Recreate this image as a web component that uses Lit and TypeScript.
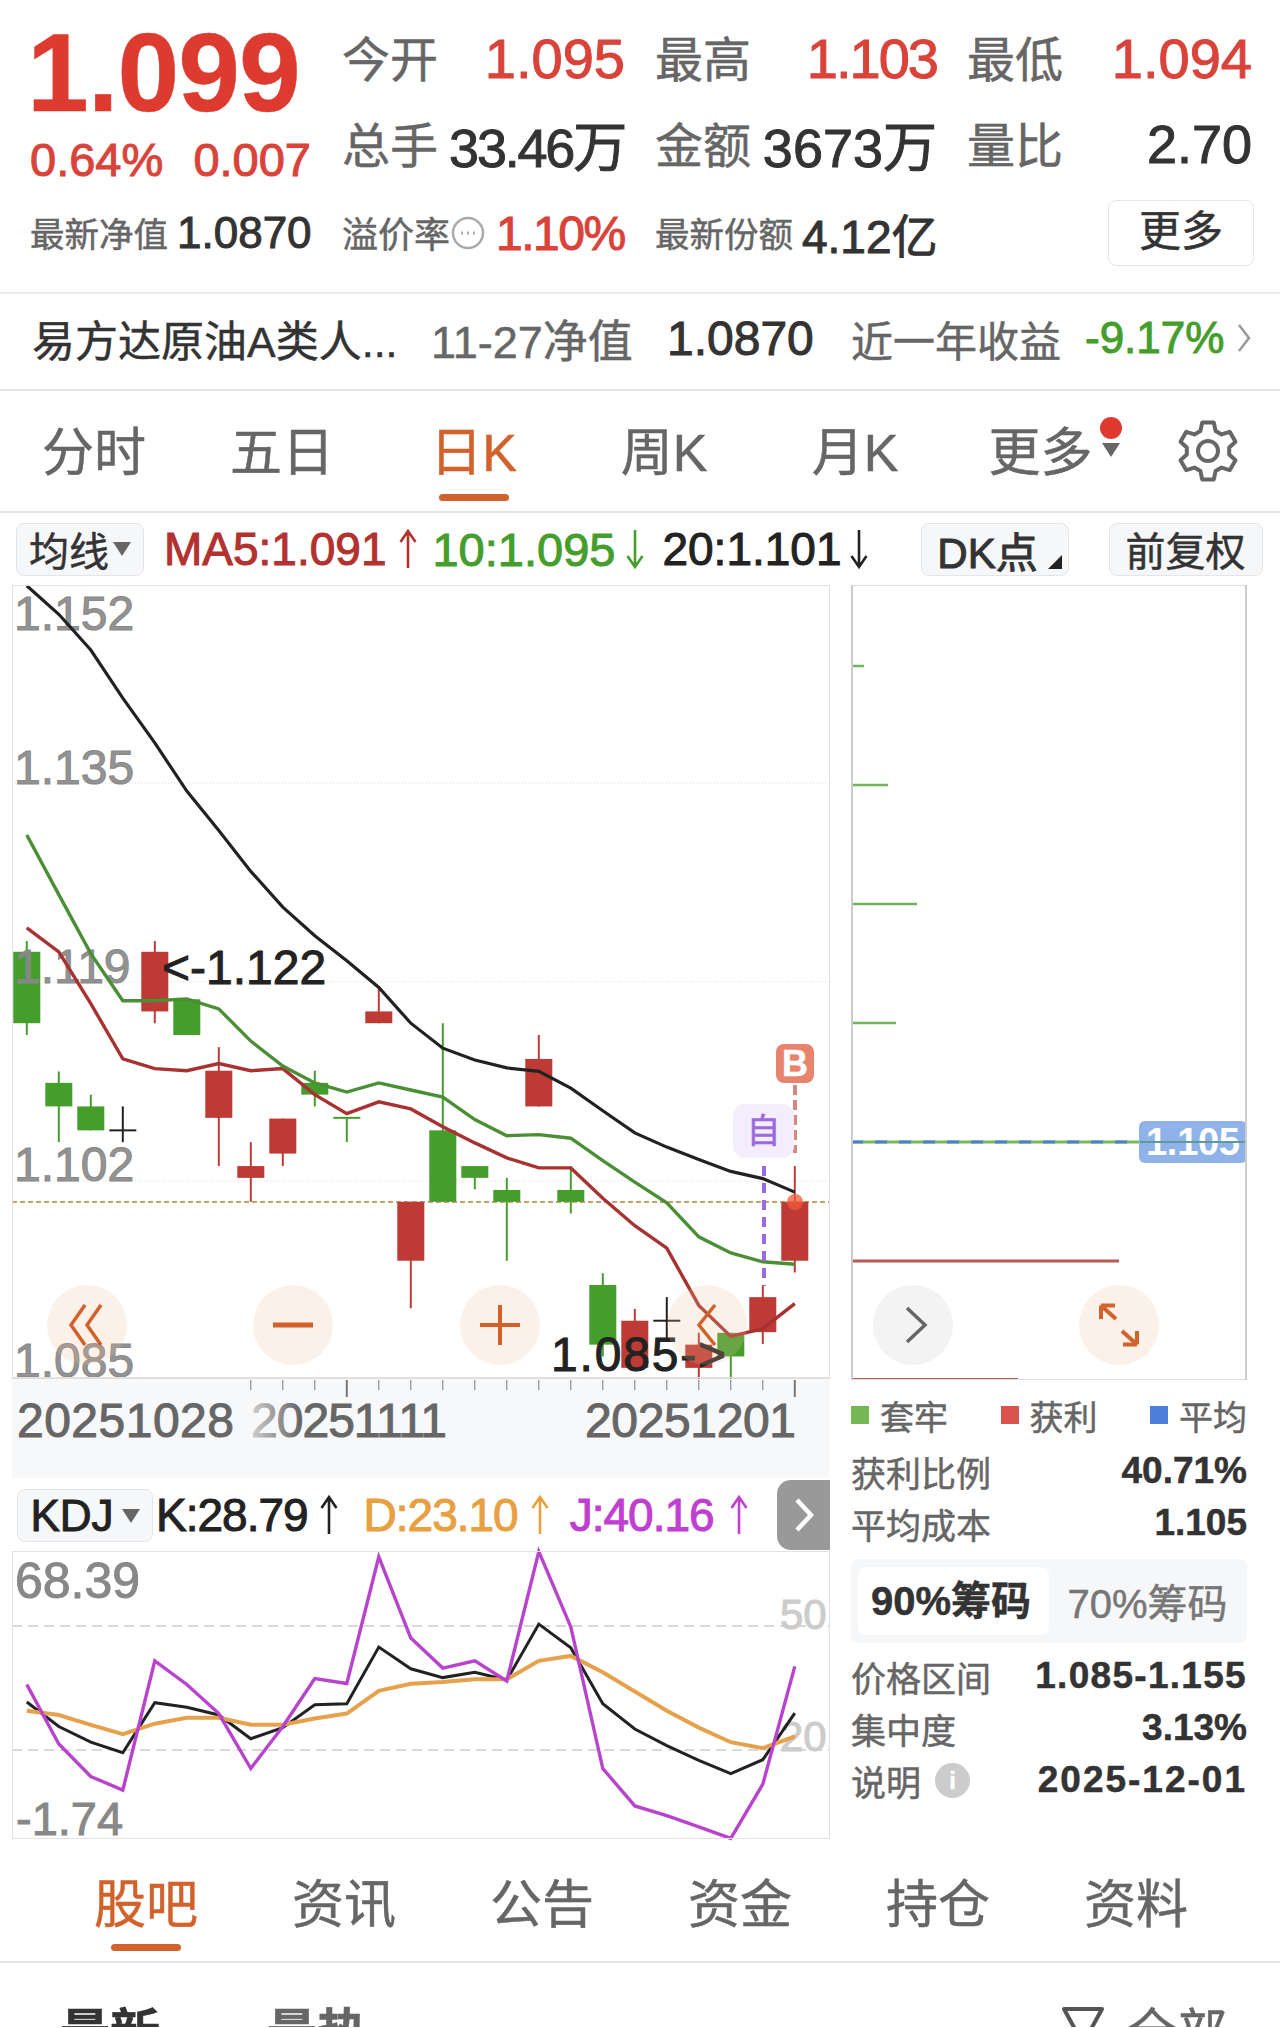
import { LitElement, html, css, svg } from 'lit';
import { customElement } from 'lit/decorators.js';

const RED = '#bd3a35';
const GREEN = '#459e2c';

// y values are read off the reference crop, cy() turns them into page pixels
const cy = (z: number) => 950 + z / 2.8;
const ky = (z: number) => 1480 + z / 2.86;
const cx = (i: number) => 26.8 + 32 * i;

type Candle = [string, number, number, number, number];
const CANDLES: Candle[] = [
  ['g', -25, 5, 205, 238],
  ['g', 340, 372, 438, 538],
  ['g', 405, 438, 505, 505],
  ['x', 438, 505, 505, 538],
  ['r', -25, 5, 172, 205],
  ['g', 138, 138, 238, 238],
  ['r', 272, 338, 470, 605],
  ['r', 538, 605, 638, 705],
  ['r', 472, 472, 570, 605],
  ['g', 338, 372, 405, 438],
  ['t', 470, 470, 470, 538],
  ['r', 105, 172, 205, 205],
  ['r', 705, 705, 870, 1003],
  ['g', 205, 505, 705, 705],
  ['g', 605, 605, 638, 670],
  ['g', 638, 672, 705, 870],
  ['r', 238, 305, 438, 438],
  ['g', 605, 672, 705, 738],
  ['g', 905, 938, 1105, 1138],
  ['r', 1005, 1038, 1170, 1170],
  ['x', 972, 1038, 1038, 1090],
  ['r', 1072, 1105, 1170, 1200],
  ['g', 1072, 1072, 1138, 1200],
  ['r', 938, 972, 1070, 1103],
  ['r', 605, 705, 870, 903],
];

const MA5 = [-62, 5, 150, 305, 332, 338, 318, 338, 332, 405, 458, 425, 445, 495, 540, 582, 610, 610, 695, 772, 835, 995, 1082, 1060, 990];
const MA10 = [-322, -155, 10, 142, 142, 137, 165, 255, 325, 372, 398, 372, 392, 412, 475, 520, 517, 527, 590, 650, 708, 803, 848, 873, 880];
const MA20 = [-1020, -940, -840, -705, -580, -445, -335, -220, -120, -40, 30, 105, 205, 275, 308, 330, 340, 387, 450, 512, 552, 587, 620, 640, 678];

const K = [635, 705, 750, 780, 637, 650, 672, 740, 708, 643, 640, 478, 540, 565, 550, 572, 412, 480, 640, 712, 760, 802, 840, 800, 667];
const D = [660, 672, 700, 727, 697, 680, 680, 700, 700, 682, 668, 603, 583, 578, 570, 570, 517, 503, 550, 605, 660, 708, 750, 767, 733];
const J = [585, 755, 848, 887, 517, 585, 668, 825, 705, 568, 582, 220, 452, 538, 517, 575, 205, 420, 825, 932, 960, 992, 1025, 870, 533];

const points = (vals: number[], toY: (z: number) => number) =>
  vals.map((v, i) => `${cx(i).toFixed(1)},${toY(v).toFixed(1)}`).join(' ');

function candle(c: Candle, i: number) {
  const [kind, top, bodyTop, bodyBottom, bottom] = c;
  const x = cx(i);
  if (kind === 'x' || kind === 't') {
    return svg`<line x1=${x} x2=${x} y1=${cy(top)} y2=${cy(bottom)} stroke=${kind === 'x' ? '#222' : GREEN} stroke-width="2"></line>
      <line x1=${x - 13.5} x2=${x + 13.5} y1=${cy(bodyTop)} y2=${cy(bodyTop)} stroke=${kind === 'x' ? '#222' : GREEN} stroke-width="2"></line>`;
  }
  const color = kind === 'r' ? RED : GREEN;
  return svg`<line x1=${x} x2=${x} y1=${cy(top)} y2=${cy(bottom)} stroke=${color} stroke-width="2"></line>
    <rect x=${x - 13.5} y=${cy(bodyTop)} width="27" height=${cy(bodyBottom) - cy(bodyTop)} fill=${color}></rect>`;
}

function gearPath(cxx: number, cyy: number, outer: number, root: number) {
  const pts: string[] = [];
  for (let t = 0; t < 6; t++) {
    const a = (t * Math.PI) / 3 - Math.PI / 2;
    const offs: [number, number][] = [[-0.36, root], [-0.2, outer], [0.2, outer], [0.36, root]];
    for (const [d, r] of offs) {
      pts.push(`${(cxx + r * Math.cos(a + d)).toFixed(1)},${(cyy + r * Math.sin(a + d)).toFixed(1)}`);
    }
  }
  return 'M' + pts.join('L') + 'Z';
}

const arrow = (up: boolean, color: string) => html`<svg class="arrow" width="20" height="40" viewBox="0 0 20 40">
  ${up
    ? svg`<path d="M10 39V2M2.5 13L10 2L17.5 13" fill="none" stroke=${color} stroke-width="2.6"></path>`
    : svg`<path d="M10 1V38M2.5 27L10 38L17.5 27" fill="none" stroke=${color} stroke-width="2.6"></path>`}
</svg>`;

const caret = html`<svg class="caret" width="18" height="14" viewBox="0 0 18 14"><path d="M0 0H18L9 14Z" fill="#666"></path></svg>`;

@customElement('app-root')
export class AppRoot extends LitElement {
  static styles = css`
    :host {
      display: block;
      width: 1280px;
      height: 2028px;
      overflow: hidden;
      background: #fff;
      color: #333;
      font-family: 'Liberation Sans', 'Noto Sans CJK SC', sans-serif;
      -webkit-text-stroke: 0.5px;
    }
    svg { display: block; overflow: visible; }
    svg text { font-family: 'Liberation Sans', 'Noto Sans CJK SC', sans-serif; stroke-width: 1px; -webkit-text-stroke: 0; }

    .quote {
      box-sizing: border-box;
      height: 294px;
      padding: 14px 28px 0 30px;
      border-bottom: 2px solid #e9e9e9;
      display: grid;
      grid-template-columns: 282px 283px 282px 285px;
      grid-template-rows: 88px 83px 96px;
      column-gap: 30px;
    }
    .price-box { grid-row: 1 / 3; }
    .price { font-size: 111px; line-height: 118px; font-weight: 700; color: #dd3b30; letter-spacing: -1px; margin-left: -3px; }
    .change { display: flex; justify-content: space-between; width: 281px; font-size: 47px; line-height: 50px; color: #d9433a; margin-top: 3px; -webkit-text-stroke: 1px; }
    .stat { display: flex; justify-content: space-between; align-items: center; }
    .stat .label { font-size: 48px; color: #666; margin-bottom: 4px; white-space: nowrap; }
    .stat .val { font-size: 56px; color: #d9433a; -webkit-text-stroke: 1px; }
    .stat .val.tight { letter-spacing: -2px; }
    .stat .num { font-size: 54px; color: #333; white-space: nowrap; -webkit-text-stroke: 1px; }
    .stat .num.tight { letter-spacing: -2.2px; }
    .small { justify-content: flex-start; gap: 9px; }
    .small .label { font-size: 34.5px; margin-bottom: 2px; }
    .small .num { font-size: 44px; }
    .small .num.wide { font-size: 46px; }
    .small .val { font-size: 48px; letter-spacing: -1.5px; margin-left: 3px; }
    .small.premium .label { font-size: 36px; }
    .dots { flex: none; margin-left: -8px; margin-right: -1px; }
    .more {
      justify-self: end;
      align-self: center;
      box-sizing: border-box;
      width: 146px;
      height: 66px;
      border: 1px solid #e6e6e6;
      border-radius: 8px;
      text-align: center;
      font-size: 42px;
      line-height: 62px;
      color: #333;
      margin-right: -2px;
    }

    .fund {
      box-sizing: border-box;
      height: 97px;
      padding: 0 0 7px 32px;
      border-bottom: 2px solid #e3e3e3;
      display: grid;
      grid-template-columns: 399px 236px 184px 234px 152px 20px;
      align-items: center;
      white-space: nowrap;
      font-size: 42px;
      color: #666;
    }
    .fund .name { color: #333; font-size: 43px; }
    .fund .date { font-size: 45px; }
    .fund .nv { font-size: 48px; color: #333; -webkit-text-stroke: 1px; }
    .fund .ret { font-size: 44px; color: #459e2c; -webkit-text-stroke: 1px; }

    .tabs {
      box-sizing: border-box;
      height: 122px;
      border-bottom: 2px solid #e3e3e3;
      display: grid;
      font-size: 52px;
      color: #666;
    }
    .kline { grid-template-columns: 188px 188px 195px 186px 196px 175px 152px; }
    .news { grid-template-columns: repeat(6, 198px); padding-left: 47px; }
    .tab { display: flex; flex-direction: column; align-items: center; padding-top: 32px; }
    .news .tab { padding-top: 34px; }
    .tab span { line-height: 60px; white-space: nowrap; position: relative; }
    .tab.on { color: #d2622b; }
    .tab.on::after { content: ''; width: 70px; height: 7px; border-radius: 4px; background: #d2622b; margin-top: 11px; }
    .news .tab.on::after { margin-top: 9px; }
    .tab i {
      position: absolute;
      left: 112px;
      top: -6px;
      width: 22px;
      height: 22px;
      border-radius: 50%;
      background: #e03a30;
    }
    .tab .tri { position: absolute; left: 114px; top: 20px; }
    .gear { padding: 28px 0 0 48px; }

    .ma {
      height: 72px;
      padding-left: 16px;
      display: flex;
      align-items: center;
      font-size: 46px;
      white-space: nowrap;
    }
    .ma b, .kdj b { font-weight: 400; -webkit-text-stroke: 1px; }
    .ma b.green { font-size: 47px; }
    .arrow { flex: none; }
    .btn {
      box-sizing: border-box;
      height: 53px;
      display: flex;
      align-items: center;
      justify-content: center;
      position: relative;
      font-size: 40px;
      color: #333;
      background: #f6f7f9;
      border: 1px solid #e3e5e8;
      border-radius: 8px;
    }
    .junxian { width: 128px; gap: 4px; margin-right: 20px; }
    .dk { width: 148px; margin-left: 52px; margin-right: 40px; padding-right: 14px; font-size: 42px; -webkit-text-stroke: 1px; }
    .dk svg { position: absolute; right: 6px; bottom: 6px; }
    .fuquan { width: 154px; }

    .body {
      height: 1256px;
      padding-left: 12px;
      display: grid;
      grid-template-columns: 818px 396px;
      column-gap: 21px;
    }
    .canvas { position: relative; }
    .axis { background: #f7f8fa; }
    .round {
      position: absolute;
      width: 80px;
      height: 80px;
      border-radius: 50%;
      background: rgba(240, 190, 150, 0.22);
      display: flex;
      align-items: center;
      justify-content: center;
    }
    .round.grey { background: #f3f3f3; }
    .round.grey svg { margin-left: 6px; }
    .tag-b {
      position: absolute;
      left: 764px;
      top: 459px;
      width: 38px;
      height: 39px;
      border-radius: 8px;
      background: #e8836e;
      color: #fff;
      font-size: 36px;
      font-weight: 700;
      line-height: 39px;
      text-align: center;
    }
    .tag-z {
      position: absolute;
      left: 721px;
      top: 519px;
      width: 61px;
      height: 54px;
      border-radius: 12px;
      background: #f3edfd;
      color: #9b6bdd;
      font-size: 34px;
      line-height: 54px;
      text-align: center;
    }

    .kdj {
      height: 73px;
      box-sizing: border-box;
      padding: 2px 0 0 5px;
      display: flex;
      align-items: flex-start;
      font-size: 46px;
      letter-spacing: -1px;
      white-space: nowrap;
      color: #222;
    }
    .kdj .btn { width: 136px; height: 53px; margin: 9px 3px 0 0; font-size: 44px; gap: 8px; color: #222; letter-spacing: 0; -webkit-text-stroke: 1px; }
    .kdj .txt { display: flex; align-items: center; height: 69px; }
    .kdj .side {
      margin-left: auto;
      width: 53px;
      height: 70px;
      background: #999;
      border-radius: 14px 0 0 14px;
      display: flex;
      align-items: center;
      justify-content: center;
    }

    .legend { display: flex; justify-content: space-between; margin-top: 15px; height: 40px; align-items: center; font-size: 34px; color: #666; }
    .legend div { display: flex; align-items: center; gap: 11px; }
    .legend i { display: block; width: 18px; height: 18px; }
    .rows { margin-top: 10px; }
    .row { display: flex; justify-content: space-between; align-items: center; height: 52px; font-size: 35px; color: #666; }
    .row b { font-size: 37px; color: #333; }
    .row b.w1 { letter-spacing: 1.3px; }
    .row b.w2 { letter-spacing: 2px; }
    .row .info { display: inline-flex; align-items: center; gap: 14px; }
    .info i {
      width: 35px;
      height: 35px;
      border-radius: 50%;
      background: #ccc;
      color: #fff;
      font-size: 24px;
      font-weight: 700;
      font-style: normal;
      line-height: 35px;
      text-align: center;
    }
    .toggle {
      box-sizing: border-box;
      height: 84px;
      margin: 10px 0 7px;
      padding: 8px 7px;
      border-radius: 8px;
      background: #f6f7f9;
      display: grid;
      grid-template-columns: 191px 1fr;
      align-items: center;
      text-align: center;
      font-size: 40px;
      color: #777;
    }
    .toggle .on { height: 68px; line-height: 68px; background: #fff; border-radius: 8px; font-weight: 700; color: #333; padding-right: 5px; }
    .toggle .off { padding-left: 6px; }

    .feed { position: relative; height: 64px; overflow: hidden; font-size: 50px; line-height: 64px; color: #666; }
    .feed span, .feed svg { position: absolute; top: 38px; white-space: nowrap; }
    .feed .hot { left: 60px; font-weight: 700; color: #333; }
    .feed .warm { left: 267px; font-weight: 700; }
    .feed svg { left: 1060px; top: 44px; }
    .feed .all { left: 1127px; }
  `;

  private mainChart() {
    const labels: [string, number][] = [['1.152', 630], ['1.135', 784], ['1.119', 983], ['1.102', 1181], ['1.085', 1377]];
    return html`<svg width="818" height="793" viewBox="12 585 818 793">
      ${[783, 982, 1181].map(y => svg`<line x1="12" x2="830" y1=${y} y2=${y} stroke="#ddd" stroke-dasharray="1 2"></line>`)}
      <line x1="12" x2="830" y1="1202" y2="1202" stroke="#b5813f" stroke-width="1.5" stroke-dasharray="5 3"></line>
      ${CANDLES.map(candle)}
      ${labels.map(([t, y]) => svg`<text x="14" y=${y} font-size="48" fill="#888" stroke="#888" fill-opacity="0.92">${t}</text>`)}
      <polyline points=${points(MA5, cy)} fill="none" stroke="#a83232" stroke-width="3.4"></polyline>
      <polyline points=${points(MA10, cy)} fill="none" stroke="#4a8f35" stroke-width="3.4"></polyline>
      <polyline points=${points(MA20, cy)} fill="none" stroke="#222" stroke-width="3.2"></polyline>
      <text x="162" y="984" font-size="48" fill="#222" stroke="#222">&lt;-1.122</text>
      <text x="551" y="1371" font-size="48" fill="#222" stroke="#222" textLength="175">1.085-&gt;</text>
      <line x1="795" x2="795" y1="1085" y2="1153" stroke="#d08a80" stroke-width="4" stroke-dasharray="10 5"></line>
      <line x1="764" x2="764" y1="1166" y2="1286" stroke="#9b6bdd" stroke-width="4" stroke-dasharray="10 7"></line>
      <circle cx="795" cy="1202" r="8" fill="#ef5a3a" fill-opacity="0.75"></circle>
      <rect x="12.5" y="585.5" width="817" height="792" fill="none" stroke="#e2e2e2"></rect>
    </svg>`;
  }

  private axis() {
    const ticks = Array.from({ length: 18 }, (_, n) => n + 7);
    return html`<svg class="axis" width="818" height="100" viewBox="12 1378 818 100">
      <defs>
        <linearGradient id="fade" gradientUnits="userSpaceOnUse" x1="252" x2="300" y1="0" y2="0">
          <stop offset="0" stop-color="#ccc"></stop>
          <stop offset="1" stop-color="#666"></stop>
        </linearGradient>
      </defs>
      <line x1="12" x2="830" y1="1378" y2="1378" stroke="#ddd" stroke-width="2"></line>
      ${ticks.map(i => svg`<line x1=${cx(i)} x2=${cx(i)} y1="1380" y2=${i === 10 || i === 24 ? 1397 : 1390} stroke="#777" stroke-width=${i === 10 || i === 24 ? 2 : 1}></line>`)}
      <text x="17" y="1437" font-size="48" fill="#666" stroke="#666" textLength="217">20251028</text>
      <text x="251" y="1437" font-size="48" fill="url(#fade)" stroke="url(#fade)" textLength="196">20251111</text>
      <text x="585" y="1437" font-size="48" fill="#666" stroke="#666" textLength="211">20251201</text>
    </svg>`;
  }

  private kdjChart() {
    return html`<svg width="818" height="288" viewBox="12 1551 818 288">
      ${[1626, 1750].map(y => svg`<line x1="12" x2="830" y1=${y} y2=${y} stroke="#ccc" stroke-width="1.5" stroke-dasharray="10 6"></line>`)}
      <text x="15" y="1598" font-size="50" fill="#888" stroke="#888">68.39</text>
      <text x="16" y="1835" font-size="47" fill="#888" stroke="#888">-1.74</text>
      <text x="780" y="1629" font-size="42" fill="#ccc" stroke="#ccc">50</text>
      <text x="780" y="1751" font-size="42" fill="#ccc" stroke="#ccc">20</text>
      <polyline points=${points(K, ky)} fill="none" stroke="#222" stroke-width="3"></polyline>
      <polyline points=${points(D, ky)} fill="none" stroke="#e5a14c" stroke-width="4"></polyline>
      <polyline points=${points(J, ky)} fill="none" stroke="#b843cc" stroke-width="3.4"></polyline>
      <rect x="12.5" y="1551.5" width="817" height="287" fill="none" stroke="#e2e2e2"></rect>
    </svg>`;
  }

  private chipChart() {
    const green: [number, number][] = [[666, 864], [785, 888], [904, 917], [1023, 896]];
    return html`<svg width="396" height="795" viewBox="851 585 396 795">
      ${green.map(([y, x]) => svg`<line x1="851" x2=${x} y1=${y} y2=${y} stroke="#6fb35b" stroke-width="2.5"></line>`)}
      <line x1="851" x2="1140" y1="1142" y2="1142" stroke="#7ab85e" stroke-width="3"></line>
      <line x1="851" x2="1140" y1="1142" y2="1142" stroke="#4a7fc9" stroke-width="3" stroke-dasharray="12 12"></line>
      <rect x="1139" y="1121" width="108" height="42" rx="6" fill="#8fb2e8"></rect>
      <text x="1146" y="1155" font-size="38" font-weight="700" fill="#fff" textLength="94">1.105</text>
      <line x1="1140" x2="1247" y1="1142" y2="1142" stroke="#5f9a9a" stroke-width="2"></line>
      <line x1="851" x2="1119" y1="1261" y2="1261" stroke="#b85a58" stroke-width="3"></line>
      <line x1="851" x2="1018" y1="1379" y2="1379" stroke="#b85a58" stroke-width="2"></line>
      <path d="M852 585.5H1246M852 1379.5H1246" stroke="#ddd"></path>
      <path d="M852 585V1380M1246 585V1380" stroke="#ccc" stroke-width="2"></path>
    </svg>`;
  }

  render() {
    return html`
      <section class="quote">
        <div class="price-box">
          <div class="price">1.099</div>
          <div class="change"><span>0.64%</span><span>0.007</span></div>
        </div>
        <div class="stat"><span class="label">今开</span><span class="val">1.095</span></div>
        <div class="stat"><span class="label">最高</span><span class="val tight">1.103</span></div>
        <div class="stat"><span class="label">最低</span><span class="val">1.094</span></div>
        <div class="stat"><span class="label">总手</span><span class="num tight">33.46万</span></div>
        <div class="stat"><span class="label">金额</span><span class="num">3673万</span></div>
        <div class="stat"><span class="label">量比</span><span class="num">2.70</span></div>
        <div class="stat small"><span class="label">最新净值</span><span class="num">1.0870</span></div>
        <div class="stat small premium">
          <span class="label">溢价率</span>
          <svg class="dots" width="34" height="34" viewBox="0 0 34 34">
            <circle cx="17" cy="17" r="15" fill="none" stroke="#aaa" stroke-width="2.5"></circle>
            <path d="M10 17h2M16 17h2M22 17h2" stroke="#aaa" stroke-width="3"></path>
          </svg>
          <span class="val">1.10%</span>
        </div>
        <div class="stat small"><span class="label">最新份额</span><span class="num wide">4.12亿</span></div>
        <div class="more">更多</div>
      </section>

      <section class="fund">
        <span class="name">易方达原油A类人...</span>
        <span class="date">11-27净值</span>
        <span class="nv">1.0870</span>
        <span>近一年收益</span>
        <span class="ret">-9.17%</span>
        <svg width="14" height="30" viewBox="0 0 14 30"><path d="M2 2L12 15L2 28" fill="none" stroke="#999" stroke-width="2.5"></path></svg>
      </section>

      <nav class="tabs kline">
        <div class="tab"><span>分时</span></div>
        <div class="tab"><span>五日</span></div>
        <div class="tab on"><span>日K</span></div>
        <div class="tab"><span>周K</span></div>
        <div class="tab"><span>月K</span></div>
        <div class="tab">
          <span>更多<i></i><svg class="tri" width="18" height="14" viewBox="0 0 18 14"><path d="M0 0H18L9 14Z" fill="#666"></path></svg></span>
        </div>
        <div class="gear">
          <svg width="64" height="64" viewBox="0 0 64 64">
            <path d=${gearPath(32, 32, 29, 21.5)} fill="none" stroke="#666" stroke-width="4" stroke-linejoin="round"></path>
            <circle cx="32" cy="32" r="10" fill="none" stroke="#666" stroke-width="4"></circle>
          </svg>
        </div>
      </nav>

      <section class="ma">
        <div class="btn junxian">均线${caret}</div>
        <b style="color:#b3312f">MA5:1.091</b><span style="width:12px"></span>${arrow(true, '#b3312f')}<span style="width:14px"></span>
        <b class="green" style="color:#459e2c">10:1.095</b><span style="width:10px"></span>${arrow(false, '#459e2c')}<span style="width:17px"></span>
        <b style="color:#222">20:1.101</b><span style="width:7px"></span>${arrow(false, '#222')}
        <div class="btn dk">DK点
          <svg width="14" height="14" viewBox="0 0 14 14"><path d="M14 0V14H0Z" fill="#222"></path></svg>
        </div>
        <div class="btn fuquan">前复权</div>
      </section>

      <section class="body">
        <div>
          <div class="canvas">
            ${this.mainChart()}
            <div class="round" style="left:35px;top:700px">
              <svg width="40" height="44" viewBox="0 0 40 44"><path d="M18 2L4 22L18 42M34 2L20 22L34 42" fill="none" stroke="#d2622b" stroke-width="3.5"></path></svg>
            </div>
            <div class="round" style="left:241px;top:700px">
              <svg width="40" height="8" viewBox="0 0 40 8"><path d="M0 4H40" stroke="#d2622b" stroke-width="5"></path></svg>
            </div>
            <div class="round" style="left:448px;top:700px">
              <svg width="40" height="40" viewBox="0 0 40 40"><path d="M0 20H40M20 0V40" stroke="#d2622b" stroke-width="4"></path></svg>
            </div>
            <div class="round" style="left:655px;top:700px">
              <svg width="24" height="44" viewBox="0 0 24 44"><path d="M20 2L4 22L20 42" fill="none" stroke="#d2622b" stroke-width="3.5"></path></svg>
            </div>
            <div class="tag-b">B</div>
            <div class="tag-z">自</div>
          </div>
          ${this.axis()}
          <div class="kdj">
            <div class="btn">KDJ${caret}</div>
            <div class="txt">
              <b>K:28.79</b><span style="width:11px"></span>${arrow(true, '#222')}<span style="width:25px"></span>
              <b style="color:#e8a040">D:23.10</b><span style="width:12px"></span>${arrow(true, '#e8a040')}<span style="width:20px"></span>
              <b style="color:#c03fd0">J:40.16</b><span style="width:15px"></span>${arrow(true, '#c03fd0')}
            </div>
            <div class="side">
              <svg width="20" height="36" viewBox="0 0 20 36"><path d="M3 3L17 18L3 33" fill="none" stroke="#fff" stroke-width="4.5"></path></svg>
            </div>
          </div>
          ${this.kdjChart()}
        </div>

        <div>
          <div class="canvas">
            ${this.chipChart()}
            <div class="round grey" style="left:22px;top:700px">
              <svg width="24" height="38" viewBox="0 0 24 38"><path d="M3 2L21 19L3 36" fill="none" stroke="#666" stroke-width="3.5"></path></svg>
            </div>
            <div class="round" style="left:228px;top:700px">
              <svg width="46" height="46" viewBox="0 0 46 46">
                <path d="M5 3.5H19M5 3.5V17M5 3.5L20 17" fill="none" stroke="#d2622b" stroke-width="4"></path>
                <path d="M41 42.5H27M41 42.5V29M41 42.5L26 29" fill="none" stroke="#d2622b" stroke-width="4"></path>
              </svg>
            </div>
          </div>
          <div class="legend">
            <div><i style="background:#75b655"></i>套牢</div>
            <div><i style="background:#d9534f"></i>获利</div>
            <div><i style="background:#4a7fd9"></i>平均</div>
          </div>
          <div class="rows">
            <div class="row"><span>获利比例</span><b>40.71%</b></div>
            <div class="row"><span>平均成本</span><b>1.105</b></div>
            <div class="toggle"><div class="on">90%筹码</div><div class="off">70%筹码</div></div>
            <div class="row"><span>价格区间</span><b class="w1">1.085-1.155</b></div>
            <div class="row"><span>集中度</span><b>3.13%</b></div>
            <div class="row"><span class="info">说明<i>i</i></span><b class="w2">2025-12-01</b></div>
          </div>
        </div>
      </section>

      <nav class="tabs news">
        <div class="tab on"><span>股吧</span></div>
        <div class="tab"><span>资讯</span></div>
        <div class="tab"><span>公告</span></div>
        <div class="tab"><span>资金</span></div>
        <div class="tab"><span>持仓</span></div>
        <div class="tab"><span>资料</span></div>
      </nav>

      <section class="feed">
        <span class="hot">最新</span>
        <span class="warm">最热</span>
        <svg width="46" height="40" viewBox="0 0 46 40"><path d="M4 2H42L30 24V38H16V24Z" fill="none" stroke="#555" stroke-width="4" stroke-linejoin="round"></path></svg>
        <span class="all">全部</span>
      </section>
    `;
  }
}
